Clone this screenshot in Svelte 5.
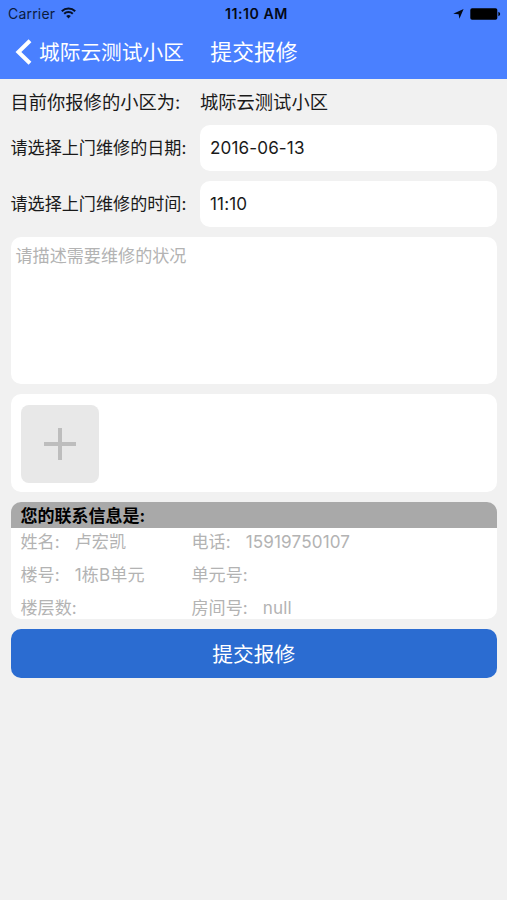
<script>
  const fields = [
    { label: '请选择上门维修的日期:', value: '2016-06-13' },
    { label: '请选择上门维修的时间:', value: '11:10' },
  ];
  const contact = [
    { label: '姓名:', value: '卢宏凯' },
    { label: '电话:', value: '15919750107' },
    { label: '楼号:', value: '1栋B单元' },
    { label: '单元号:', value: '' },
    { label: '楼层数:', value: '' },
    { label: '房间号:', value: 'null' },
  ];
</script>

<div class="screen">
  <header>
    <div class="status">
      <div class="left">
        <span class="carrier">Carrier</span>
        <svg class="wifi" width="15" height="12" viewBox="0 0 15 12" fill="none" stroke="#061027" stroke-width="2">
          <path d="M.8 4.2a9.5 9.5 0 0 1 13.4 0" />
          <path d="M3.2 6.8a6.1 6.1 0 0 1 8.6 0" />
          <path d="M7.5 11.5 5.2 9.1a3.3 3.3 0 0 1 4.6 0z" fill="#061027" stroke="none" />
        </svg>
      </div>
      <span class="time">11:10 AM</span>
      <div class="right">
        <svg width="11" height="10" viewBox="0 0 11 10"><path d="M10.6 0 6.4 9.8 5.6 5.3.2 4.7z" fill="#030916" /></svg>
        <svg width="31" height="12" viewBox="0 0 31 12">
          <rect x=".3" y=".3" width="27" height="11.4" rx="1.8" fill="#000" />
          <path d="M28.4 3.8q1.8.7 1.8 2.2t-1.8 2.2z" fill="#000" />
        </svg>
      </div>
    </div>
    <nav>
      <svg class="back" width="18" height="26" viewBox="0 0 18 26" fill="none" stroke="#fff" stroke-width="4">
        <path d="M16 1.7 4.4 13 16 24.3" />
      </svg>
      <span class="parent">城际云测试小区</span>
      <span class="title">提交报修</span>
    </nav>
  </header>

  <main>
    <div class="community">
      <span class="label">目前你报修的小区为:</span>
      <span>城际云测试小区</span>
    </div>
    {#each fields as f}
      <div class="field">
        <span class="label">{f.label}</span>
        <div class="input">{f.value}</div>
      </div>
    {/each}
    <div class="describe">请描述需要维修的状况</div>
    <div class="photos">
      <div class="add">
        <svg width="32" height="32" viewBox="0 0 32 32" fill="#bdbdbd">
          <path d="M14 0h4v14h14v4H18v14h-4V18H0v-4h14z" />
        </svg>
      </div>
    </div>
    <section class="contact">
      <h2>您的联系信息是:</h2>
      <div class="grid">
        {#each contact as c}
          <div class="item"><span>{c.label}</span><span class="value">{c.value}</span></div>
        {/each}
      </div>
    </section>
    <div class="submit">提交报修</div>
  </main>
</div>

<style>
  :global(body) {
    background: #f1f1f1;
  }
  .screen {
    box-sizing: border-box;
    height: 900px;
    overflow: hidden;
    background: #f1f1f1;
    color: #1a1a1a;
    font-family: Inter, 'Noto Sans CJK SC', sans-serif;
    white-space: nowrap;
  }
  header {
    height: 79px;
    background: #4a80ff;
  }
  .status {
    display: grid;
    grid-template-columns: 1fr auto 1fr;
    align-items: center;
    height: 27px;
    padding: 0 6px 0 8px;
    color: #030916;
  }
  .left,
  .right {
    display: flex;
    align-items: center;
  }
  .left {
    gap: 6px;
    color: #0b1b3e;
  }
  .wifi {
    margin-top: -2px;
  }
  .carrier {
    font-size: 14px;
    letter-spacing: 0.2px;
    line-height: 27px;
  }
  .time {
    padding-left: 4px;
    font-size: 14.2px;
    font-weight: 600;
    letter-spacing: 0.5px;
  }
  .right {
    justify-content: flex-end;
    gap: 6px;
  }
  nav {
    display: flex;
    align-items: center;
    height: 50px;
    padding-left: 14px;
    color: #fff;
    line-height: 30px;
  }
  .parent {
    margin: 1px 0 0 7px;
    font-size: 20.7px;
  }
  .title {
    margin: 0 0 0 26.5px;
    font-size: 21.8px;
  }
  main {
    display: flex;
    flex-direction: column;
    gap: 10px;
    padding: 0 10px 0 10.5px;
  }
  .community {
    display: flex;
    align-items: center;
    height: 45.5px;
    margin-bottom: -10px;
    font-size: 18.3px;
    line-height: 26px;
  }
  .community span {
    margin-top: 1px;
  }
  .label {
    width: 189.5px;
    flex: none;
  }
  .field {
    display: flex;
    align-items: center;
    height: 46px;
    font-size: 17.1px;
  }
  .field .label {
    margin-top: -3px;
  }
  .input {
    flex: 1;
    padding-left: 10px;
    border-radius: 10px;
    background: #fff;
    letter-spacing: 0.12px;
    line-height: 46px;
  }
  .describe {
    box-sizing: border-box;
    height: 147.5px;
    padding: 6px 5px;
    border-radius: 10px;
    background: #fff;
    color: #b3b3b3;
    font-size: 17.1px;
    line-height: 26px;
  }
  .photos {
    box-sizing: border-box;
    height: 98px;
    padding: 10.5px 10px;
    border-radius: 10px;
    background: #fff;
  }
  .add {
    display: flex;
    align-items: center;
    justify-content: center;
    width: 78.5px;
    height: 78px;
    border-radius: 8px;
    background: #e8e8e8;
  }
  .contact {
    height: 117px;
    border-radius: 10px;
    overflow: hidden;
    background: #fff;
  }
  h2 {
    margin: 0;
    padding: 1.5px 0 0 10px;
    background: #a9a9a9;
    color: #000;
    font-size: 17px;
    font-weight: 700;
    line-height: 24px;
  }
  .grid {
    display: grid;
    grid-template-columns: 171px 1fr;
    row-gap: 9px;
    padding: 2px 10px 0;
    color: #b3b3b3;
    font-size: 17.1px;
    line-height: 24px;
  }
  .item {
    display: flex;
    height: 24px;
  }
  .value {
    margin-left: 15px;
    letter-spacing: 0.15px;
  }
  .submit {
    height: 48.5px;
    border-radius: 10px;
    background: #2b6cd1;
    color: #fff;
    font-size: 20.7px;
    line-height: 51px;
    text-align: center;
  }
</style>
